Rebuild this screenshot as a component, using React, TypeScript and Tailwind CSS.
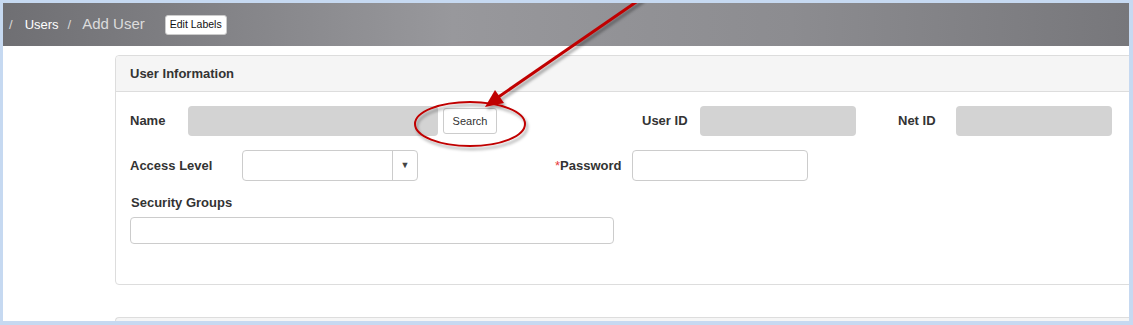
import React from "react";

const font = { fontFamily: '"Liberation Sans", Arial, sans-serif' };

const Label = ({ children, className = "" }: { children: React.ReactNode; className?: string }) => (
  <label className={`text-[13px] leading-[16px] font-bold text-[#333] shrink-0 ${className}`}>{children}</label>
);

export default function App() {
  return (
    <div
      style={font}
      className="relative w-[1133px] h-[325px] overflow-hidden bg-white border-t-[3px] border-l-[3px] border-r-[4px] border-b-[4px] border-[#c6d9f1]"
    >
      {/* breadcrumb bar */}
      <div className="h-[43px] flex items-center pl-[6px] bg-[linear-gradient(90deg,#6f6f73_0%,#98989c_40%,#8c8c90_70%,#77777b_100%)]">
        <span className="text-[13px] text-[#d8d8d8]">/</span>
        <span className="ml-[12px] text-[13px] text-white">Users</span>
        <span className="ml-[9px] text-[13px] text-[#d8d8d8]">/</span>
        <span className="ml-[11px] text-[15px] text-[#dcdcdc]">Add User</span>
        <button className="ml-[20px] h-[20px] px-[4px] bg-white border border-[#ccc] rounded-[3px] text-[10.5px] text-[#111]">
          Edit Labels
        </button>
      </div>

      {/* main */}
      <div className="pt-[9px] pl-[112px]">
        <div className="w-[1040px] border border-[#ddd] rounded-[4px]">
          <div className="h-[36px] flex items-center pl-[14px] bg-[#f5f5f5] border-b border-[#ddd] rounded-t-[4px]">
            <span className="text-[13px] font-bold text-[#333]">User Information</span>
          </div>
          <div className="pt-[14px] pl-[14px] pb-[40px]">
            <div className="flex items-center h-[30px]">
              <Label className="w-[58px]">Name</Label>
              <div className="w-[250px] h-[30px] bg-[#d3d3d3] rounded-[4px]" />
              <button className="ml-[5px] w-[54px] h-[26px] bg-white border border-[#ccc] rounded-[3px] text-[11px] text-[#333]">
                Search
              </button>
              <Label className="ml-[145px] w-[58px]">User ID</Label>
              <div className="w-[156px] h-[30px] bg-[#d3d3d3] rounded-[4px]" />
              <Label className="ml-[42px] w-[58px]">Net ID</Label>
              <div className="w-[156px] h-[30px] bg-[#d3d3d3] rounded-[4px]" />
            </div>

            <div className="flex items-center h-[31px] mt-[14px]">
              <Label className="w-[112px]">Access Level</Label>
              <div className="w-[176px] h-[31px] flex border border-[#ccc] rounded-[4px] bg-white">
                <div className="flex-1" />
                <div className="w-[25px] border-l border-[#ccc] flex items-center justify-center text-[9px] text-[#444]">▼</div>
              </div>
              <Label className="ml-[137px] w-[77px]">
                <span className="text-[#e83a3a] font-normal">*</span>Password
              </Label>
              <div className="w-[176px] h-[31px] border border-[#ccc] rounded-[4px] bg-white" />
            </div>

            <div className="mt-[14px] pl-[1px] flex">
              <Label>Security Groups</Label>
            </div>
            <div className="mt-[6px] w-[484px] h-[27px] border border-[#ccc] rounded-[4px] bg-white" />
          </div>
        </div>

        <div className="mt-[32px] w-[1040px] h-[20px] border-t border-l border-[#ddd] rounded-tl-[4px] bg-[#f5f5f5]" />
      </div>

      {/* annotation overlay */}
      <svg
        className="absolute left-[-3px] top-[-3px] pointer-events-none"
        width="1133"
        height="325"
        viewBox="0 0 1133 325"
      >
        <defs>
          <filter id="sh" x="-20%" y="-20%" width="140%" height="140%">
            <feDropShadow dx="2" dy="3" stdDeviation="1.5" floodColor="#000" floodOpacity="0.35" />
          </filter>
        </defs>
        <g filter="url(#sh)">
          <line x1="642" y1="-2" x2="497" y2="98" stroke="#c00000" strokeWidth="3" />
          <polygon points="485,107 504,103 495,90" fill="#c00000" />
          <ellipse cx="470" cy="124" rx="55" ry="22" fill="none" stroke="#c00000" strokeWidth="2" />
        </g>
      </svg>
    </div>
  );
}
